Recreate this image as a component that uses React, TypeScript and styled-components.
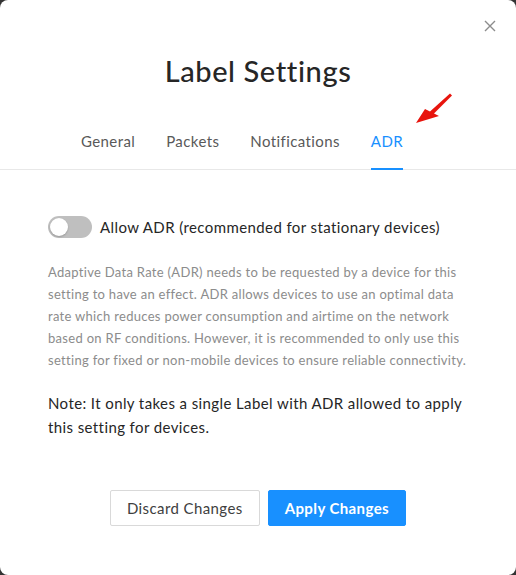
import React from "react";
import styled, { createGlobalStyle } from "styled-components";

const Global = createGlobalStyle`
  html, body { margin: 0; padding: 0; background: #333; }
  body { font-family: "Lato", "Noto Sans", sans-serif; -webkit-font-smoothing: antialiased; }
  * { box-sizing: border-box; }
`;

const Modal = styled.div`
  position: relative;
  width: 516px;
  height: 575px;
  background: #fff;
  border-radius: 8px;
  display: flex;
  flex-direction: column;
`;

const Close = styled.button`
  position: absolute;
  top: 18px;
  right: 18px;
  width: 16px;
  height: 16px;
  padding: 0;
  border: none;
  background: none;
  display: flex;
  align-items: center;
  justify-content: center;
`;

const Title = styled.h1`
  margin: 54px 0 0;
  font-size: 29px;
  line-height: 34px;
  font-weight: 500;
  color: #262626;
  text-align: center;
  letter-spacing: 0.6px;
`;

const TabBar = styled.div`
  position: relative;
  margin-top: 43px;
  padding-right: 32px;
  display: flex;
  justify-content: center;
  gap: 31px;
  border-bottom: 1px solid #e8e8e8;
`;

const Tab = styled.div<{ $active?: boolean }>`
  font-size: 15px;
  line-height: 20px;
  letter-spacing: 0.4px;
  padding: 0 0 17px;
  color: ${(p) => (p.$active ? "#1890ff" : "#595959")};
  border-bottom: 2px solid ${(p) => (p.$active ? "#1890ff" : "transparent")};
  margin-bottom: -1px;
`;

const Arrow = styled.svg`
  position: absolute;
  left: 414px;
  top: -37px;
  overflow: visible;
`;

const Body = styled.div`
  padding: 46px 48px 0;
  display: flex;
  flex-direction: column;
`;

const ToggleRow = styled.div`
  display: flex;
  align-items: center;
  gap: 8px;
`;

const Switch = styled.div`
  width: 44px;
  height: 22px;
  border-radius: 11px;
  background: #bfbfbf;
  padding: 2px;
  display: flex;
`;

const Knob = styled.div`
  width: 18px;
  height: 18px;
  border-radius: 50%;
  background: #fff;
  box-shadow: 0 1px 2px rgba(0, 0, 0, 0.2);
`;

const ToggleLabel = styled.span`
  font-size: 15px;
  letter-spacing: 0.4px;
  color: #262626;
`;

const Desc = styled.p`
  margin: 23px 0 0;
  font-size: 13px;
  line-height: 22px;
  letter-spacing: 0.3px;
  color: #8c8c8c;
`;

const Note = styled.p`
  margin: 20px 0 0;
  font-size: 15px;
  line-height: 24px;
  letter-spacing: 0.4px;
  color: #262626;
`;

const Actions = styled.div`
  margin-top: 51px;
  display: flex;
  justify-content: center;
  gap: 8px;
`;

const Button = styled.button<{ $primary?: boolean }>`
  height: 36px;
  padding: 0 16px;
  font-family: inherit;
  font-size: 15px;
  letter-spacing: 0.4px;
  font-weight: ${(p) => (p.$primary ? 700 : 400)};
  border-radius: 2px;
  border: 1px solid ${(p) => (p.$primary ? "#1890ff" : "#d9d9d9")};
  background: ${(p) => (p.$primary ? "#1890ff" : "#fff")};
  color: ${(p) => (p.$primary ? "#fff" : "#404040")};
`;

export default function App() {
  return (
    <>
      <Global />
      <Modal>
        <Close aria-label="Close">
          <svg width="12" height="12" viewBox="0 0 12 12">
            <path d="M1 1L11 11M11 1L1 11" stroke="#8c8c8c" strokeWidth="1.4" />
          </svg>
        </Close>
        <Title>Label Settings</Title>
        <TabBar>
          <Tab>General</Tab>
          <Tab>Packets</Tab>
          <Tab>Notifications</Tab>
          <Tab $active>ADR</Tab>
          <Arrow width="40" height="32" viewBox="0 0 40 32">
            <path d="M2 29 L11 15 L16 17.5 L36 -0.5 L38 1.5 L20 19.5 L25 22 Z" fill="#e8140d" />
          </Arrow>
        </TabBar>
        <Body>
          <ToggleRow>
            <Switch>
              <Knob />
            </Switch>
            <ToggleLabel>Allow ADR (recommended for stationary devices)</ToggleLabel>
          </ToggleRow>
          <Desc>
            Adaptive Data Rate (ADR) needs to be requested by a device for this setting to have an
            effect. ADR allows devices to use an optimal data rate which reduces power consumption
            and airtime on the network based on RF conditions. However, it is recommended to only
            use this setting for fixed or non-mobile devices to ensure reliable connectivity.
          </Desc>
          <Note>
            Note: It only takes a single Label with ADR allowed to apply this setting for devices.
          </Note>
          <Actions>
            <Button>Discard Changes</Button>
            <Button $primary>Apply Changes</Button>
          </Actions>
        </Body>
      </Modal>
    </>
  );
}
